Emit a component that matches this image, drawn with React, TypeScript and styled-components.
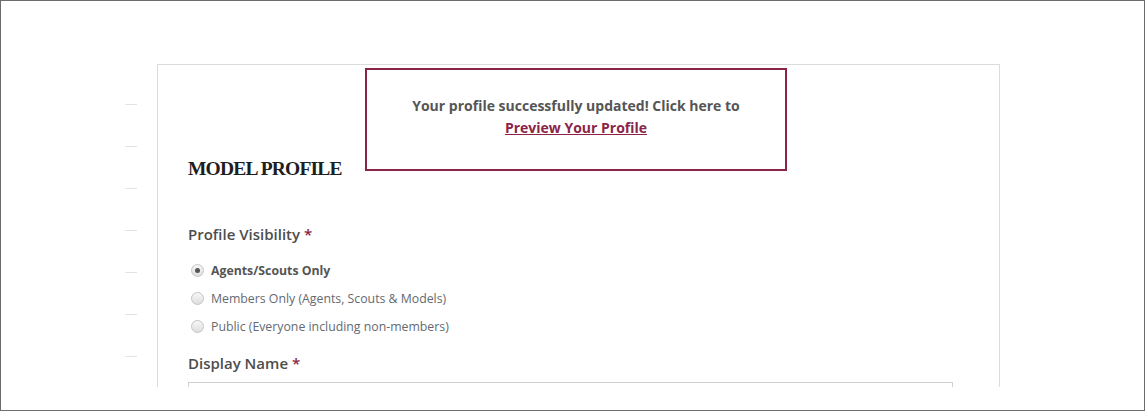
import * as React from 'react';
import styled, { createGlobalStyle } from 'styled-components';

const GlobalStyle = createGlobalStyle`
  html, body {
    margin: 0;
    padding: 0;
    background: #fff;
  }
  * {
    box-sizing: border-box;
  }
`

const Frame = styled.div`
  width: 1145px;
  height: 411px;
  border: 1px solid #6c6c6c;
  background: #fff;
  font-family: "Open Sans", "Liberation Sans", sans-serif;
`

const Viewport = styled.div`
  position: relative;
  height: 386px;
  overflow: hidden;
  display: flex;
  align-items: flex-start;
  padding-top: 63px;
`

const DashColumn = styled.div`
  width: 12px;
  margin-left: 124px;
  padding-top: 40px;
  display: flex;
  flex-direction: column;
`

const Dash = styled.div`
  height: 42px;
  border-top: 1px solid #e2e2e2;
`

const Card = styled.div`
  width: 843px;
  margin-left: 20px;
  min-height: 500px;
  border: 1px solid #dcdcdc;
  background: #fff;
  padding: 92px 46px 40px 30px;
`

const Heading = styled.h2`
  margin: 0 0 42px;
  font-family: "Liberation Serif", "DejaVu Serif", serif;
  font-weight: 700;
  font-size: 19.5px;
  line-height: 24px;
  letter-spacing: -0.8px;
  color: #1e1e1e;
`

const Label = styled.div<{ $gap: number }>`
  font-size: 15px;
  font-weight: 600;
  line-height: 22px;
  color: #4d4d4d;
  margin-bottom: ${p => p.$gap}px;
`

const Required = styled.span`
  color: #8a2548;
`

const RadioGroup = styled.div`
  display: flex;
  flex-direction: column;
  margin-bottom: 12px;
`

const RadioRow = styled.label<{ $checked?: boolean }>`
  display: flex;
  align-items: center;
  gap: 7px;
  height: 28px;
  padding-left: 3px;
  font-size: 12.3px;
  font-weight: ${p => (p.$checked ? 700 : 400)};
  color: ${p => (p.$checked ? '#555' : '#646a70')};
`

const Radio = styled.span<{ $checked?: boolean }>`
  position: relative;
  width: 13px;
  height: 13px;
  border-radius: 50%;
  border: 1px solid #c4c4c4;
  background: linear-gradient(#f7f7f7, #dedede);
  flex-shrink: 0;

  &::after {
    content: '';
    display: ${p => (p.$checked ? 'block' : 'none')};
    position: absolute;
    left: 3px;
    top: 3px;
    width: 5px;
    height: 5px;
    border-radius: 50%;
    background: #555;
  }
`

const TextInput = styled.div`
  height: 36px;
  border: 1px solid #cfcfcf;
`

const Notice = styled.div`
  position: absolute;
  left: 364px;
  top: 67px;
  width: 422px;
  height: 103px;
  border: 2px solid #8a2548;
  background: #fff;
  padding-top: 25px;
  text-align: center;
  font-size: 14px;
  font-weight: 700;
  line-height: 22px;
  color: #555;
`

const NoticeLink = styled.a`
  color: #8a2548;
  text-decoration: underline;
`

const options = [
  { label: 'Agents/Scouts Only', checked: true },
  { label: 'Members Only (Agents, Scouts & Models)' },
  { label: 'Public (Everyone including non-members)' },
]

const App = () => (
  <>
    <GlobalStyle />
    <Frame>
      <Viewport>
        <DashColumn>
          {[0, 1, 2, 3, 4, 5, 6].map(i => <Dash key={i} />)}
        </DashColumn>
        <Card>
          <Heading>MODEL PROFILE</Heading>
          <Label $gap={11}>Profile Visibility <Required>*</Required></Label>
          <RadioGroup>
            {options.map(o => (
              <RadioRow key={o.label} $checked={o.checked}>
                <Radio $checked={o.checked} />
                {o.label}
              </RadioRow>
            ))}
          </RadioGroup>
          <Label $gap={8}>Display Name <Required>*</Required></Label>
          <TextInput />
        </Card>
        <Notice>
          Your profile successfully updated! Click here to
          <br />
          <NoticeLink>Preview Your Profile</NoticeLink>
        </Notice>
      </Viewport>
    </Frame>
  </>
);

export default App;
